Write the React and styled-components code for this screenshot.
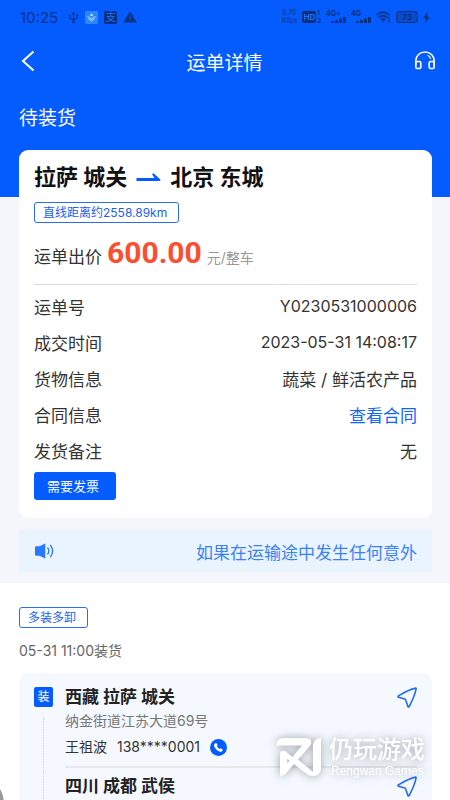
import React from "react";
import styled, { createGlobalStyle } from "styled-components";

const GlobalStyle = createGlobalStyle`
  * {
    box-sizing: border-box;
  }

  body {
    margin: 0;
    background: #fff;
    color: #333;
    font-family: Inter, "Noto Sans CJK SC", sans-serif;
    font-size: 16px;
  }

  button {
    padding: 0;
    border: none;
    background: none;
    color: inherit;
    font: inherit;
    cursor: pointer;
  }

  svg {
    display: block;
  }
`;

const details = [
  { label: "运单号", value: "Y0230531000006", numeric: true },
  { label: "成交时间", value: "2023-05-31 14:08:17", numeric: true },
  { label: "货物信息", value: "蔬菜 / 鲜活农产品" },
  { label: "合同信息", value: "查看合同", link: true },
  { label: "发货备注", value: "无" },
];

const stops = [
  {
    id: 1,
    city: "西藏 拉萨 城关",
    address: "纳金街道江苏大道69号",
    contact: "王祖波",
    phone: "138****0001",
  },
  { id: 2, city: "四川 成都 武侯" },
];

function UsbIcon() {
  return (
    <svg width="11" height="13" viewBox="0 0 12 13" fill="none" stroke="currentColor" strokeWidth="1.2">
      <path d="M6 2v9M2 5v2.5L6 9l4-2V4.5" />
      <path d="M6 0l2 3H4zM1 3.5h2v2H1zM9 3h2v2H9z" fill="currentColor" stroke="none" />
      <circle cx="6" cy="11.3" r="1.5" fill="currentColor" stroke="none" />
    </svg>
  );
}

function LayersIcon() {
  return (
    <svg width="13" height="13" viewBox="0 0 13 13">
      <rect width="13" height="13" rx="1" fill="#2b86ff" />
      <path d="M6.5 2.4L8 3.9 6.5 5.4 5 3.9z" fill="#d6e8ff" />
      <path d="M2.5 5.5l4 2.6 4-2.6M3.5 7.8l3 2.2 3-2.2" fill="none" stroke="#d6e8ff" strokeWidth="0.9" />
    </svg>
  );
}

function WarningIcon() {
  return (
    <svg width="14" height="12" viewBox="0 0 14 12">
      <path d="M7 0.5L13.8 11.5H0.2z" fill="currentColor" />
      <path d="M7 4v4M7 9v1.3" stroke="#0455e8" strokeWidth="1.2" />
    </svg>
  );
}

function SignalIcon() {
  return (
    <svg width="15" height="6" viewBox="0 0 15 6" fill="currentColor">
      <path d="M0 4h3v2H0zM4 3h3v3H4zM8 1.5h3V6H8zM12 0h3v6h-3z" />
    </svg>
  );
}

function WifiIcon() {
  return (
    <svg width="15" height="12" viewBox="0 0 15 12" fill="none" stroke="currentColor" strokeWidth="1.6">
      <path d="M0.7 4Q7 -1.8 13.5 4M2.8 6.5Q7 2.8 11.3 6.5M5 8.8Q7 7.1 9.2 8.8" />
      <path d="M5.5 9.5h3L7 11.5z" fill="currentColor" stroke="none" />
      <path d="M13 6.5v2M13 9.5v2" />
    </svg>
  );
}

function BoltIcon() {
  return (
    <svg width="7" height="11" viewBox="0 0 7 11" fill="currentColor">
      <path d="M4.5 0L0 6h2.7L2 11l5-6.3H4.1z" />
    </svg>
  );
}

function BackIcon() {
  return (
    <svg width="14" height="22" viewBox="0 0 14 22" fill="none" stroke="currentColor" strokeWidth="2">
      <path d="M12.5 1.5L2 11l10.5 9.5" />
    </svg>
  );
}

function HeadsetIcon() {
  return (
    <svg width="22" height="20" viewBox="0 0 22 20" fill="none" stroke="currentColor" strokeWidth="1.6">
      <path d="M1.8 14V9.500a9.200 8.500 0 0 1 18.400 0v5" />
      <rect x="1.8" y="10.5" width="5" height="7" rx="1.5" />
      <rect x="15.2" y="10.5" width="5" height="7" rx="1.5" />
      <path d="M13.5 4.3q2.6 1 3.2 3.500" strokeWidth="1.2" />
    </svg>
  );
}

function RouteArrow() {
  return (
    <svg width="25" height="9" viewBox="0 0 25 9">
      <path d="M0.5 5H18.5L16.2 1.6Q16 0 17.8 0.6L24.4 6.6Q24.8 8 23.4 8H0.5Z" fill="#045cff" />
    </svg>
  );
}

function SpeakerIcon() {
  return (
    <svg width="19" height="16" viewBox="0 0 19 16">
      <path d="M0 4.2q0-1 1-1h3.5L10.3 0.4v15.2L4.5 12.8H1q-1 0-1-1z" fill="#2879ff" />
      <path d="M12.5 4.5q2.6 3.5 0 7M15.3 1.8q4.6 6.2 0 12.4" fill="none" stroke="#2879ff" strokeWidth="1.3" />
    </svg>
  );
}

function NavigateIcon() {
  return (
    <svg width="20" height="21" viewBox="0 0 20 21" fill="none" stroke="#226cf8" strokeWidth="1.6" strokeLinejoin="round">
      <path d="M18.6 1.1Q12 2.4 1.4 8.9q-1 .9.2 1.3l6 1.9q1 .4 1.3 1.4l2 6q.6 1 1.3 0Q17.6 9.5 19.2 1.7q0-.7-.6-.6z" />
    </svg>
  );
}

function PhoneIcon() {
  return (
    <svg width="17" height="17" viewBox="0 0 16 16">
      <circle cx="8" cy="8" r="8" fill="#045cff" />
      <path d="M4.2 4.8l1.5-1.3 1.6 2.3-.7 1q.8 1.6 2.4 2.5l1-.7 2.2 1.5-1.1 1.6q-1.3.9-3.7-.6-2.5-1.7-3.5-4.3-.3-1.2.3-2z" fill="#fff" />
    </svg>
  );
}

function WatermarkLogo() {
  return (
    <svg width="46" height="39" viewBox="0 0 46 39">
      <path
        d="M0 7.5Q1 0 8 0H30Q38 1 34 8L22 21.500 37 34V7Q38 0 45 0V31Q44 38 37 38 33 38 30 35.500L18 26 9.500 36Q7 38.500 4 37.500V16Q4.500 11.500 9 13L16.500 19 26 7.500Z"
        fill="#fff"
      />
      <path d="M11 20.5l3 2.5-3 2.5z" fill="#cdd2da" />
    </svg>
  );
}

function Stop({ stop, first }) {
  return (
    <StopRow>
      <Rail>
        {first && <LoadBadge>装</LoadBadge>}
        <RailLine />
      </Rail>
      <StopBody>
        <StopHeader>
          <City>{stop.city}</City>
          <button aria-label="导航">
            <NavigateIcon />
          </button>
        </StopHeader>
        {stop.address && <Address>{stop.address}</Address>}
        {stop.contact && (
          <Contact>
            <span>{stop.contact}</span>
            <span>{stop.phone}</span>
            <button aria-label="拨打电话">
              <PhoneIcon />
            </button>
          </Contact>
        )}
      </StopBody>
    </StopRow>
  );
}

function App() {
  return (
    <>
      <GlobalStyle />
      <Screen>
        <Hero>
          <StatusBar>
            <StatusGroup $gap="6px">
              <Clock>10:25</Clock>
              <UsbIcon />
              <LayersIcon />
              <PayBadge>支</PayBadge>
              <WarningIcon />
            </StatusGroup>
            <StatusGroup $gap="5px">
              <TinyStack>
                <span>5.70</span>
                <span>KB/s</span>
              </TinyStack>
              <HdGroup>
                <HdBadge>HD</HdBadge>
                <TinyStack $bold>
                  <span>1</span>
                  <span>2</span>
                </TinyStack>
              </HdGroup>
              <Network>
                4G+
                <SignalIcon />
              </Network>
              <Network>
                4G
                <SignalIcon />
              </Network>
              <WifiIcon />
              <Battery>73</Battery>
              <BoltIcon />
            </StatusGroup>
          </StatusBar>
          <TitleBar>
            <button aria-label="返回">
              <BackIcon />
            </button>
            <Title>运单详情</Title>
            <button aria-label="客服">
              <HeadsetIcon />
            </button>
          </TitleBar>
          <OrderStatus>待装货</OrderStatus>
        </Hero>

        <Summary>
          <Card>
            <Route>
              <span>拉萨 城关</span>
              <RouteArrow />
              <span>北京 东城</span>
            </Route>
            <Tag>直线距离约2558.89km</Tag>
            <PriceRow>
              <span>运单出价</span>
              <Price>600.00</Price>
              <Unit>元/整车</Unit>
            </PriceRow>
            <Details>
              {details.map((item) => (
                <DetailRow key={item.label}>
                  <dt>{item.label}</dt>
                  <DetailValue $numeric={item.numeric}>
                    {item.link ? <DetailLink href="#contract">{item.value}</DetailLink> : item.value}
                  </DetailValue>
                </DetailRow>
              ))}
            </Details>
            <InvoiceButton>需要发票</InvoiceButton>
          </Card>
          <Notice>
            <SpeakerIcon />
            <span>如果在运输途中发生任何意外</span>
          </Notice>
        </Summary>

        <Schedule>
          <Tag>多装多卸</Tag>
          <LoadTime>05-31 11:00装货</LoadTime>
          <StopList>
            {stops.map((stop, i) => (
              <Stop key={stop.id} stop={stop} first={i === 0} />
            ))}
          </StopList>
        </Schedule>

        <CornerBubble />
        <Watermark>
          <WatermarkLogo />
          <WatermarkText>
            <WatermarkName>仍玩游戏</WatermarkName>
            <WatermarkSub>Rengwan Games</WatermarkSub>
          </WatermarkText>
        </Watermark>
      </Screen>
    </>
  );
}

export default App;

const Screen = styled.div`
  position: relative;
  height: 100vh;
  overflow: hidden;
`;

const Hero = styled.header`
  padding-bottom: 64px;
  background: #045cff;
  color: #fff;
`;

const StatusBar = styled.div`
  display: flex;
  justify-content: space-between;
  height: 34px;
  padding: 0 20px;
  color: #08307f;
`;

const StatusGroup = styled.div`
  display: flex;
  align-items: center;
  gap: ${(props) => props.$gap};
`;

const Clock = styled.span`
  margin-right: 4px;
  font-size: 15px;
`;

const PayBadge = styled.span`
  width: 13px;
  height: 13px;
  border-radius: 2px;
  background: #08307f;
  color: #2472ee;
  font-size: 11px;
  line-height: 12px;
  text-align: center;
`;

const TinyStack = styled.span`
  display: flex;
  flex-direction: column;
  font-size: ${(props) => (props.$bold ? "6px" : "7px")};
  font-weight: ${(props) => (props.$bold ? 700 : 400)};
  line-height: 8px;
`;

const HdGroup = styled.span`
  display: flex;
  align-items: center;
  gap: 1px;
`;

const HdBadge = styled.span`
  padding: 0 1px;
  border-radius: 2px;
  background: #08307f;
  color: #2472ee;
  font-size: 8px;
  font-weight: 700;
  line-height: 12px;
`;

const Network = styled.span`
  display: flex;
  flex-direction: column;
  width: 20px;
  font-size: 7px;
  font-weight: 700;
  line-height: 6px;

  svg {
    align-self: flex-end;
  }
`;

const Battery = styled.span`
  width: 22px;
  border: 1px solid #08307f;
  border-radius: 3px;
  background: #0a4bcb;
  font-size: 8px;
  font-weight: 700;
  line-height: 10px;
  text-align: center;
`;

const TitleBar = styled.div`
  display: flex;
  align-items: center;
  justify-content: space-between;
  height: 54px;
  padding: 0 14px 0 21px;
`;

const Title = styled.h1`
  margin: 0;
  font-size: 19px;
  font-weight: 400;
`;

const OrderStatus = styled.div`
  padding: 17px 19px 0;
  font-size: 19px;
  line-height: 28px;
`;

const Summary = styled.section`
  display: flow-root;
  padding: 0 18px 11px 19px;
  background: #f4f6fb;
`;

const Card = styled.div`
  margin-top: -47px;
  padding: 12px 15px 18px;
  border-radius: 9px;
  background: #fff;
`;

const Route = styled.div`
  display: flex;
  align-items: center;
  gap: 9px;
  margin-bottom: 10px;
  color: #111;
  font-size: 22px;
  font-weight: 700;
  line-height: 30px;
`;

const Tag = styled.div`
  width: fit-content;
  padding: 0 11px 0 8px;
  border: 1px solid #2b6cf6;
  border-radius: 3px;
  color: #1c60ea;
  font-size: 12px;
  line-height: 19px;
`;

const PriceRow = styled.div`
  display: flex;
  align-items: baseline;
  gap: 5px;
  margin-top: 12px;
  padding-bottom: 13px;
  border-bottom: 1px solid #ddd;
  font-size: 17px;
  line-height: 17px;
`;

const Price = styled.strong`
  color: #fa4f30;
  font-family: Roboto, sans-serif;
  font-size: 30px;
  line-height: 36px;
`;

const Unit = styled.span`
  color: #999;
  font-size: 14px;
`;

const Details = styled.dl`
  margin: 3px 0 4px;
`;

const DetailRow = styled.div`
  display: flex;
  align-items: center;
  justify-content: space-between;
  height: 36px;
  font-size: 17px;
`;

const DetailValue = styled.dd`
  margin: 0;
  font-size: ${(props) => (props.$numeric ? "16px" : "17px")};
`;

const DetailLink = styled.a`
  color: #1263fa;
  text-decoration: none;
`;

const InvoiceButton = styled.button`
  && {
    display: block;
    padding: 0 17px 0 13px;
    border-radius: 3px;
    background: #045cff;
    color: #fff;
    font-size: 13px;
    line-height: 28px;
  }
`;

const Notice = styled.div`
  display: flex;
  align-items: center;
  justify-content: space-between;
  height: 42px;
  margin-top: 12px;
  padding: 0 15px 0 16px;
  background: #e9f4ff;
  color: #3c82f5;
  font-size: 17px;
`;

const Schedule = styled.section`
  padding: 24px 18px 24px 19px;
`;

const LoadTime = styled.div`
  margin: 11px 0 10px;
  color: #666;
  font-size: 14px;
  line-height: 24px;
`;

const StopList = styled.div`
  padding: 10px 15px;
  border-radius: 9px;
  background: #f5f9ff;
`;

const StopRow = styled.div`
  display: flex;
  gap: 12px;
`;

const Rail = styled.div`
  display: flex;
  flex-direction: column;
  align-items: center;
  width: 19px;
`;

const LoadBadge = styled.span`
  width: 19px;
  margin: 4px 0 10px;
  border-radius: 2px;
  background: #045cff;
  color: #fff;
  font-size: 12px;
  line-height: 20px;
  text-align: center;
`;

const RailLine = styled.span`
  flex: 1;
  border-left: 1px dotted #ccc;
`;

const StopBody = styled.div`
  flex: 1;
  padding-bottom: 5px;

  ${StopRow}:not(:last-child) > & {
    margin-bottom: 4px;
    border-bottom: 2px solid #e8e9eb;
  }
`;

const StopHeader = styled.div`
  display: flex;
  align-items: center;
  justify-content: space-between;
`;

const City = styled.h2`
  margin: 0;
  color: #222;
  font-size: 17px;
  line-height: 28px;
`;

const Address = styled.div`
  color: #777;
  font-size: 14px;
  line-height: 20px;
`;

const Contact = styled.div`
  display: flex;
  align-items: center;
  gap: 10px;
  margin-top: 2px;
  font-size: 14px;
  line-height: 28px;
`;

const CornerBubble = styled.div`
  position: absolute;
  bottom: -34px;
  left: -56px;
  width: 60px;
  height: 60px;
  border-radius: 50%;
  background: #999;
`;

const Watermark = styled.div`
  position: absolute;
  right: 25px;
  bottom: 21px;
  display: flex;
  align-items: center;
  gap: 7px;
  color: #fff;
  filter: drop-shadow(0 0 5px rgba(90, 95, 105, 0.6));
`;

const WatermarkText = styled.div`
  display: flex;
  flex-direction: column;
`;

const WatermarkName = styled.span`
  font-size: 24px;
  font-weight: 500;
  line-height: 28px;
`;

const WatermarkSub = styled.span`
  padding-left: 2px;
  font-family: "Liberation Sans", Arial, sans-serif;
  font-size: 12px;
  line-height: 15px;
`;
